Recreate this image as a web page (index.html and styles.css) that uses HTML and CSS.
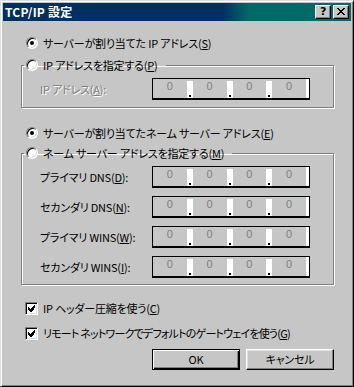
FILE: index.html
```html
<!DOCTYPE html>
<html lang="ja">
<head>
<meta charset="utf-8">
<title>TCP/IP 設定</title>
<link rel="stylesheet" href="styles.css">
</head>
<body>
<div class="window">
  <div class="titlebar">
    <span class="title">TCP/IP 設定</span>
    <div class="caps">
      <span class="capbtn help">?</span>
      <span class="capbtn close"><svg width="8" height="7" viewBox="0 0 8 7" shape-rendering="crispEdges"><path d="M0 0h2v1h-2zM6 0h2v1h-2zM1 1h2v1h-2zM5 1h2v1h-2zM2 2h4v1h-4zM3 3h2v1h-2zM2 4h4v1h-4zM1 5h2v1h-2zM5 5h2v1h-2zM0 6h2v1h-2zM6 6h2v1h-2z" fill="#000"/></svg></span>
    </div>
  </div>
  <div class="content">
    <div class="row opt"><span class="radio checked"></span><span>サーバーが割り当てた IP アドレス(<u>S</u>)</span></div>

    <fieldset class="group g1">
      <legend><span class="radio"></span><span>IP アドレスを指定する(<u>P</u>)</span></legend>
      <div class="field-row">
        <span class="label disabled">IP アドレス(<u>A</u>):</span>
        <div class="ip"><span class="oct">0</span><span class="sep"></span><span class="oct">0</span><span class="sep"></span><span class="oct">0</span><span class="sep"></span><span class="oct">0</span></div>
      </div>
    </fieldset>

    <div class="row opt opt3"><span class="radio checked"></span><span>サーバーが割り当てたネーム サーバー アドレス(<u>E</u>)</span></div>

    <fieldset class="group g2">
      <legend><span class="radio"></span><span>ネーム サーバー アドレスを指定する(<u>M</u>)</span></legend>
      <div class="field-row">
        <span class="label">プライマリ DNS(<u>D</u>):</span>
        <div class="ip"><span class="oct">0</span><span class="sep"></span><span class="oct">0</span><span class="sep"></span><span class="oct">0</span><span class="sep"></span><span class="oct">0</span></div>
      </div>
      <div class="field-row">
        <span class="label">セカンダリ DNS(<u>N</u>):</span>
        <div class="ip"><span class="oct">0</span><span class="sep"></span><span class="oct">0</span><span class="sep"></span><span class="oct">0</span><span class="sep"></span><span class="oct">0</span></div>
      </div>
      <div class="field-row">
        <span class="label">プライマリ WINS(<u>W</u>):</span>
        <div class="ip"><span class="oct">0</span><span class="sep"></span><span class="oct">0</span><span class="sep"></span><span class="oct">0</span><span class="sep"></span><span class="oct">0</span></div>
      </div>
      <div class="field-row">
        <span class="label">セカンダリ WINS(<u>I</u>):</span>
        <div class="ip"><span class="oct">0</span><span class="sep"></span><span class="oct">0</span><span class="sep"></span><span class="oct">0</span><span class="sep"></span><span class="oct">0</span></div>
      </div>
    </fieldset>

    <div class="row chk chk1"><span class="checkbox"><svg width="7" height="7" viewBox="0 0 7 7" shape-rendering="crispEdges"><path d="M6 0h1v3h-1zM5 1h1v4h-1zM4 2h1v4h-1zM0 2h1v3h-1zM1 3h1v3h-1zM3 3h1v4h-1zM2 4h1v3h-1z" fill="#000"/></svg></span><span>IP ヘッダー圧縮を使う(<u>C</u>)</span></div>
    <div class="row chk chk2"><span class="checkbox"><svg width="7" height="7" viewBox="0 0 7 7" shape-rendering="crispEdges"><path d="M6 0h1v3h-1zM5 1h1v4h-1zM4 2h1v4h-1zM0 2h1v3h-1zM1 3h1v3h-1zM3 3h1v4h-1zM2 4h1v3h-1z" fill="#000"/></svg></span><span class="tight">リモート ネットワークでデフォルトのゲートウェイを使う(<u>G</u>)</span></div>

    <div class="buttons">
      <span class="btn default">OK</span>
      <span class="btn">キャンセル</span>
    </div>
  </div>
</div>
</body>
</html>
```

FILE: styles.css
```css
html, body {
  margin: 0;
  padding: 0;
  background: #c6c6c6;
}
body {
  font-family: "Noto Sans CJK JP", "Noto Sans", sans-serif;
  font-size: 11px;
  font-feature-settings: "palt" 1;
  letter-spacing: -0.2px;
  color: #000;
}
u { text-decoration: underline; text-underline-offset: 1px; }
.tight { letter-spacing: -0.8px; }

.window {
  width: 354px;
  height: 387px;
  box-sizing: border-box;
  background: #c6c6c6;
  border: 1px solid;
  border-color: #dfdfdf #000 #000 #dfdfdf;
  box-shadow: inset 1px 1px 0 #fff, inset -1px -1px 0 #808080;
  padding: 2px;
  display: flex;
  flex-direction: column;
}

.titlebar {
  height: 18px;
  flex: none;
  display: flex;
  align-items: center;
  justify-content: space-between;
  padding: 0 2px 0 2px;
  background: linear-gradient(to right, #003062 0, #003062 220px, #006a68 246px, #006a68 100%);
}
.title {
  color: #fff;
  font-weight: bold;
  font-size: 12px;
  line-height: 18px;
  letter-spacing: 0.2px;
  font-feature-settings: normal;
}
.caps {
  display: flex;
  gap: 2px;
}
.capbtn {
  width: 16px;
  height: 14px;
  box-sizing: border-box;
  background: #c6c6c6;
  border: 1px solid;
  border-color: #fff #000 #000 #fff;
  box-shadow: inset -1px -1px 0 #808080;
  display: flex;
  align-items: center;
  justify-content: center;
}
.help {
  font-family: "DejaVu Sans", sans-serif;
  font-weight: bold;
  font-size: 11px;
  line-height: 1;
  padding-bottom: 1px;
}
.close svg { display: block; margin-bottom: 1px; }

.content {
  flex: 1;
  display: flex;
  flex-direction: column;
  padding: 15px 17px 0 18px;
}

.row {
  height: 14px;
  display: flex;
  align-items: center;
  gap: 5px;
  white-space: nowrap;
  line-height: 14px;
}
.opt { padding-left: 5px; }
.opt3 { margin-top: 18px; }

.radio {
  width: 12px;
  height: 12px;
  flex: none;
  box-sizing: border-box;
  border-radius: 50%;
  background: #fff;
  border: 1px solid;
  border-color: #808080 #fff #fff #808080;
  box-shadow: inset 1px 1px 0 #000, inset -1px -1px 0 #dfdfdf;
  position: relative;
}
.radio.checked::after {
  content: "";
  position: absolute;
  left: 3px;
  top: 3px;
  width: 4px;
  height: 4px;
  border-radius: 50%;
  background: #000;
}

.group {
  margin: 0;
  padding: 6px 0 7px 18px;
  border: 1px solid #808080;
  box-shadow: 1px 1px 0 #fff, inset 1px 1px 0 #fff;
  min-width: 0;
}
.g1 { margin-top: 8px; }
.g2 { margin-top: 6px; padding-bottom: 6px; }
.group legend {
  padding: 0 8px 0 2px;
  margin-left: -16px;
  height: 14px;
  display: flex;
  align-items: center;
  gap: 5px;
  white-space: nowrap;
  line-height: 14px;
}
.g2 .field-row + .field-row { margin-top: 8px; }

.field-row {
  display: flex;
  align-items: center;
  height: 22px;
}
.label {
  width: 112px;
  flex: none;
  white-space: nowrap;
}
.label.disabled {
  color: #808080;
  text-shadow: 1px 1px 0 #fff;
}

.ip {
  width: 158px;
  height: 22px;
  box-sizing: border-box;
  border: 1px solid #000;
  border-bottom-width: 2px;
  background: #c6c6c6;
  box-shadow: inset -3px 0 0 #fff;
  display: flex;
  padding: 2px 3px 0 0;
}
.oct {
  flex: 1;
  color: #808080;
  text-align: center;
  font-family: "Liberation Sans", sans-serif;
  font-size: 11px;
  line-height: 11px;
  letter-spacing: 0;
}
.sep {
  width: 6px;
  flex: none;
  display: flex;
  justify-content: center;
  align-items: flex-end;
  padding-bottom: 1px;
  box-sizing: border-box;
  background: #fff;
}
.sep::after {
  content: "";
  width: 2px;
  height: 2px;
  background: #000;
}

.chk { padding-left: 4px; gap: 5px; }
.chk1 { margin-top: 16px; }
.chk2 { margin-top: 11px; }
.checkbox {
  width: 13px;
  height: 13px;
  flex: none;
  box-sizing: border-box;
  background: #fff;
  border: 1px solid;
  border-color: #808080 #fff #fff #808080;
  box-shadow: inset 1px 1px 0 #000, inset -1px -1px 0 #dfdfdf;
  display: flex;
  align-items: center;
  justify-content: center;
}
.checkbox svg { display: block; }

.buttons {
  margin-top: 9px;
  display: flex;
  justify-content: flex-end;
  gap: 6px;
}
.btn {
  width: 88px;
  height: 21px;
  box-sizing: border-box;
  background: #c6c6c6;
  border: 1px solid;
  border-color: #fff #000 #000 #fff;
  box-shadow: inset -1px -1px 0 #808080, inset 1px 1px 0 #dfdfdf;
  display: flex;
  align-items: center;
  justify-content: center;
  line-height: 1;
}
.btn.default {
  border-color: #000;
  box-shadow: inset 1px 1px 0 #fff, inset -1px -1px 0 #000, inset -2px -2px 0 #808080;
}
```
